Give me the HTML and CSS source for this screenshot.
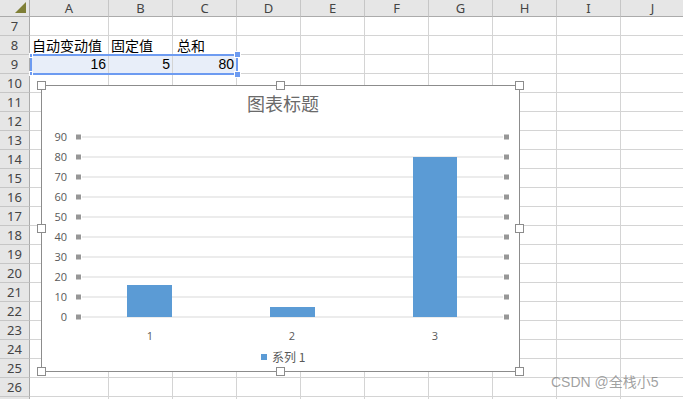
FILE: index.html
```html
<!DOCTYPE html>
<html>
<head>
    <meta charset="utf-8">
    <link rel="stylesheet" href="styles.css">
</head>
<body>
<div class="sheet">
    <table class="grid">
        <colgroup>
            <col class="c-rh"><col class="c-a"><col class="c-n"><col class="c-n"><col class="c-n"><col class="c-n"><col class="c-n"><col class="c-n"><col class="c-n"><col class="c-n"><col class="c-n">
        </colgroup>
        <tr class="head">
            <th class="corner"><span class="tri"></span></th><th>A</th><th>B</th><th>C</th><th>D</th><th>E</th><th>F</th><th>G</th><th>H</th><th>I</th><th>J</th>
        </tr>
        <tr><th>7</th><td></td><td></td><td></td><td></td><td></td><td></td><td></td><td></td><td></td><td></td></tr>
        <tr><th>8</th><td class="txt">自动变动值</td><td class="txt">固定值</td><td class="txt txt-c">总和</td><td></td><td></td><td></td><td></td><td></td><td></td><td></td></tr>
        <tr><th>9</th><td class="num sel">16</td><td class="num sel">5</td><td class="num sel">80</td><td></td><td></td><td></td><td></td><td></td><td></td><td></td></tr>
        <tr><th>10</th><td></td><td></td><td></td><td></td><td></td><td></td><td></td><td></td><td></td><td></td></tr>
        <tr><th>11</th><td></td><td></td><td></td><td></td><td></td><td></td><td></td><td></td><td></td><td></td></tr>
        <tr><th>12</th><td></td><td></td><td></td><td></td><td></td><td></td><td></td><td></td><td></td><td></td></tr>
        <tr><th>13</th><td></td><td></td><td></td><td></td><td></td><td></td><td></td><td></td><td></td><td></td></tr>
        <tr><th>14</th><td></td><td></td><td></td><td></td><td></td><td></td><td></td><td></td><td></td><td></td></tr>
        <tr><th>15</th><td></td><td></td><td></td><td></td><td></td><td></td><td></td><td></td><td></td><td></td></tr>
        <tr><th>16</th><td></td><td></td><td></td><td></td><td></td><td></td><td></td><td></td><td></td><td></td></tr>
        <tr><th>17</th><td></td><td></td><td></td><td></td><td></td><td></td><td></td><td></td><td></td><td></td></tr>
        <tr><th>18</th><td></td><td></td><td></td><td></td><td></td><td></td><td></td><td></td><td></td><td></td></tr>
        <tr><th>19</th><td></td><td></td><td></td><td></td><td></td><td></td><td></td><td></td><td></td><td></td></tr>
        <tr><th>20</th><td></td><td></td><td></td><td></td><td></td><td></td><td></td><td></td><td></td><td></td></tr>
        <tr><th>21</th><td></td><td></td><td></td><td></td><td></td><td></td><td></td><td></td><td></td><td></td></tr>
        <tr><th>22</th><td></td><td></td><td></td><td></td><td></td><td></td><td></td><td></td><td></td><td></td></tr>
        <tr><th>23</th><td></td><td></td><td></td><td></td><td></td><td></td><td></td><td></td><td></td><td></td></tr>
        <tr><th>24</th><td></td><td></td><td></td><td></td><td></td><td></td><td></td><td></td><td></td><td></td></tr>
        <tr><th>25</th><td></td><td></td><td></td><td></td><td></td><td></td><td></td><td></td><td></td><td></td></tr>
        <tr><th>26</th><td></td><td></td><td></td><td></td><td></td><td></td><td></td><td></td><td></td><td></td></tr>
        <tr><th></th><td></td><td></td><td></td><td></td><td></td><td></td><td></td><td></td><td></td><td></td></tr>
    </table>

    <!-- selected range A9:C9 -->
    <div class="selection">
        <span class="sh sh-tl"></span><span class="sh sh-bl"></span>
        <span class="sh sh-tr"></span><span class="sh sh-br"></span>
    </div>

    <!-- embedded chart -->
    <div class="chart">
        <div class="plot">
            <svg width="477" height="285" viewBox="0 0 477 285">
                <text class="title" x="241" y="25" text-anchor="middle">图表标题</text>
                <g class="gridlines">
                    <line x1="40" y1="51" x2="461" y2="51"/>
                    <line x1="40" y1="71" x2="461" y2="71"/>
                    <line x1="40" y1="91" x2="461" y2="91"/>
                    <line x1="40" y1="111" x2="461" y2="111"/>
                    <line x1="40" y1="131" x2="461" y2="131"/>
                    <line x1="40" y1="151" x2="461" y2="151"/>
                    <line x1="40" y1="171" x2="461" y2="171"/>
                    <line x1="40" y1="191" x2="461" y2="191"/>
                    <line x1="40" y1="211" x2="461" y2="211"/>
                    <line x1="40" y1="231" x2="461" y2="231"/>
                </g>
                <g class="marks">
                    <rect x="34" y="48.5" width="5" height="5"/><rect x="462" y="48.5" width="5" height="5"/>
                    <rect x="34" y="68.5" width="5" height="5"/><rect x="462" y="68.5" width="5" height="5"/>
                    <rect x="34" y="88.5" width="5" height="5"/><rect x="462" y="88.5" width="5" height="5"/>
                    <rect x="34" y="108.5" width="5" height="5"/><rect x="462" y="108.5" width="5" height="5"/>
                    <rect x="34" y="128.5" width="5" height="5"/><rect x="462" y="128.5" width="5" height="5"/>
                    <rect x="34" y="148.5" width="5" height="5"/><rect x="462" y="148.5" width="5" height="5"/>
                    <rect x="34" y="168.5" width="5" height="5"/><rect x="462" y="168.5" width="5" height="5"/>
                    <rect x="34" y="188.5" width="5" height="5"/><rect x="462" y="188.5" width="5" height="5"/>
                    <rect x="34" y="208.5" width="5" height="5"/><rect x="462" y="208.5" width="5" height="5"/>
                    <rect x="34" y="228.5" width="5" height="5"/><rect x="462" y="228.5" width="5" height="5"/>
                </g>
                <g class="axis" text-anchor="end">
                    <text x="25" y="55">90</text>
                    <text x="25" y="75">80</text>
                    <text x="25" y="95">70</text>
                    <text x="25" y="115">60</text>
                    <text x="25" y="135">50</text>
                    <text x="25" y="155">40</text>
                    <text x="25" y="175">30</text>
                    <text x="25" y="195">20</text>
                    <text x="25" y="215">10</text>
                    <text x="25" y="235">0</text>
                </g>
                <g class="bars">
                    <rect x="85" y="199" width="45" height="32"/>
                    <rect x="228" y="221" width="45" height="10"/>
                    <rect x="371" y="71" width="44" height="160"/>
                </g>
                <g class="axis" text-anchor="middle">
                    <text x="108" y="254">1</text>
                    <text x="250" y="254">2</text>
                    <text x="393" y="254">3</text>
                </g>
                <rect class="legend-key" x="219" y="268" width="6" height="6"/>
                <text class="legend" x="230" y="276">系列 1</text>
            </svg>
        </div>
        <span class="ch ch-1"></span><span class="ch ch-2"></span><span class="ch ch-3"></span>
        <span class="ch ch-4"></span><span class="ch ch-5"></span>
        <span class="ch ch-6"></span><span class="ch ch-7"></span><span class="ch ch-8"></span>
    </div>

    <div class="watermark">CSDN @全栈小5</div>
</div>
</body>
</html>
```
FILE: styles.css
```css
body {
    margin: 0;
    background: #fff;
    overflow: hidden;
    font-family: "Noto Sans CJK SC", sans-serif;
}
.sheet {
    position: relative;
    width: 683px;
    height: 399px;
    overflow: hidden;
}
.grid {
    border-collapse: separate;
    border-spacing: 0;
    table-layout: fixed;
    width: 685px;
}
.c-rh {width: 30px}
.c-a {width: 79px}
.c-n {width: 64px}
.grid td, .grid th {
    box-sizing: border-box;
    height: 19px;
    padding: 0;
    border-right: 1px solid #d4d4d4;
    border-bottom: 1px solid #d4d4d4;
    white-space: nowrap;
    overflow: hidden;
}
.grid th {
    background: #e6e6e6;
    border-color: #c6c6c6;
    color: #444;
    font-family: "Noto Sans", sans-serif;
    font-weight: normal;
    font-size: 13px;
    line-height: 18px;
    text-align: center;
}
.grid .head th {
    height: 17px;
    line-height: 16px;
    border-bottom-color: #ababab;
}
.grid tr th:first-child {border-right-color: #ababab}
.corner {position: relative}
.tri {
    position: absolute;
    right: 3px;
    bottom: 3px;
    width: 0;
    height: 0;
    border-left: 11px solid transparent;
    border-bottom: 11px solid #7f7f36;
}
.txt {
    font-size: 14px;
    line-height: 18px;
    color: #000;
    padding-left: 2px !important;
}
.txt-c {padding-left: 4px !important}
.num {
    font-family: "Liberation Sans", "Noto Sans CJK SC", sans-serif;
    font-size: 14px;
    line-height: 18px;
    color: #000;
    text-align: right;
    padding-right: 2px !important;
}
.sel {background: #e8eef9}

.selection {
    position: absolute;
    left: 30px;
    top: 54px;
    width: 208px;
    height: 21px;
    box-sizing: border-box;
    border: 2px solid #6d9bf1;
}
.sh {
    position: absolute;
    background: #6d9bf1;
    border: 1px solid #fff;
}
.sh-tr, .sh-br {width: 5px; height: 5px; right: -5px}
.sh-tr {top: -5px}
.sh-br {bottom: -5px}
.sh-tl, .sh-bl {width: 2px; height: 3px; left: -3px}
.sh-tl {top: -3px}
.sh-bl {bottom: -3px}

.chart {
    position: absolute;
    left: 41px;
    top: 85px;
    width: 479px;
    height: 287px;
}
.plot {
    box-sizing: border-box;
    width: 100%;
    height: 100%;
    background: #fff;
    border: 1px solid #8c8c8c;
}
.plot svg {display: block}
.title {
    font-family: "Noto Sans CJK SC", sans-serif;
    font-size: 18px;
    fill: #6a6a6a;
}
.gridlines line {stroke: #d9d9d9; stroke-width: 1}
.marks rect {fill: #979797}
.axis {
    font-family: "Open Sans", "Noto Sans", sans-serif;
    font-size: 11px;
    fill: #595959;
}
.bars rect {fill: #5b9bd5}
.legend-key {fill: #5b9bd5}
.legend {
    font-family: "Noto Sans CJK SC", sans-serif;
    font-size: 12px;
    fill: #595959;
}
.ch {
    position: absolute;
    width: 7px;
    height: 7px;
    background: #fff;
    border: 1px solid #8c8c8c;
}
.ch-1 {left: -4px; top: -4px}
.ch-2 {left: 235px; top: -4px}
.ch-3 {left: 474px; top: -4px}
.ch-4 {left: -4px; top: 139px}
.ch-5 {left: 474px; top: 139px}
.ch-6 {left: -4px; top: 282px}
.ch-7 {left: 235px; top: 282px}
.ch-8 {left: 474px; top: 282px}

.watermark {
    position: absolute;
    left: 551px;
    top: 371px;
    font-family: "Liberation Sans", "Noto Sans CJK SC", sans-serif;
    font-size: 14px;
    color: rgba(120, 120, 120, 0.7);
}
```
